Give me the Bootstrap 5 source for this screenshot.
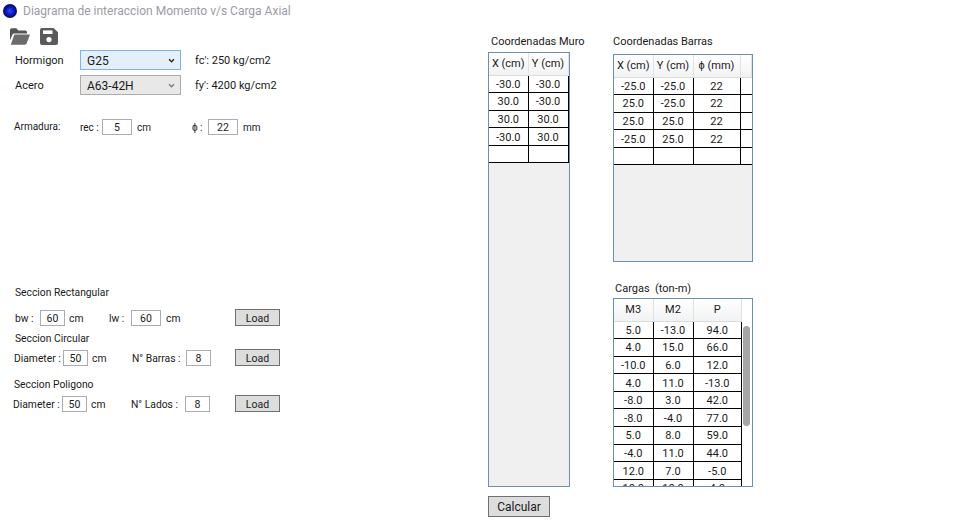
<!DOCTYPE html>
<html lang="es">
<head>
<meta charset="utf-8">
<title>Diagrama de interaccion</title>
<link href="https://cdn.jsdelivr.net/npm/bootstrap@5.3.0/dist/css/bootstrap.min.css" rel="stylesheet">
<style>
html,body{height:100%;}
body{margin:0;background:#fff;color:#1a1a1a;font-family:Roboto,"Open Sans",sans-serif;font-size:11px;line-height:16px;overflow:hidden;}
.lienzo{width:953px;height:528px;}
.izq{width:488px;flex:none;}
.barra-titulo{height:22px;padding-left:3px;gap:6px;color:#9b9ba6;font-size:12px;}
.herramientas{height:28px;padding:6px 0 0 10px;gap:10px;}
.fila{display:flex;align-items:center;height:16px;white-space:nowrap;}
.fila>span,.tit-sec{padding-top:2px;}
.combo-fila{height:20px;margin-bottom:5px;padding-left:15px;}
.combo-fila .rot{width:65px;}
.combo-fila .val{margin-left:14px;}
.form-select.combo{width:101px;height:20px;padding:1px 0 0 6px;border-radius:0;border:1px solid #acacac;font:12px/18px Roboto,sans-serif;color:#1a1a1a;background-color:#e8e8e8;background-image:url("data:image/svg+xml,%3csvg xmlns='http://www.w3.org/2000/svg' viewBox='0 0 8 6'%3e%3cpath fill='none' stroke='%23777' stroke-width='1.5' d='M1 1.5l3 3 3-3'/%3e%3c/svg%3e");background-size:7px 5px;background-position:right 5px center;box-shadow:none;}
.form-select.combo.activo{border-color:#7eb4ea;background-color:#e3effb;background-image:url("data:image/svg+xml,%3csvg xmlns='http://www.w3.org/2000/svg' viewBox='0 0 8 6'%3e%3cpath fill='none' stroke='%23222' stroke-width='1.5' d='M1 1.5l3 3 3-3'/%3e%3c/svg%3e");}
.form-control.caja{height:16px;padding:1px 0 0;border-radius:0;border:1px solid #abadb3;text-align:center;font-size:10.5px;line-height:14px;color:#1a1a1a;min-height:0;}
.ancho30{width:30px;flex:none;}
.ancho25{width:25px;flex:none;}
.btn.carga{width:45px;height:17px;padding:2px 0 0;border-radius:0;border:1px solid #707070;background:#dddddd;color:#1a1a1a;font-size:10.5px;line-height:13px;margin-left:auto;flex:none;}
.arm{margin-top:24px;padding-left:14px;width:280px;font-size:10px;}
.fila>.arm-a{width:66px;flex:none;padding-top:0;}
.arm-rec{width:22px;flex:none;}
.fila>.arm-cm{width:60px;padding-left:5px;flex:none;}
.arm-phi{width:16px;flex:none;}
.fila>.arm-mm{padding-left:5px;}
.sec{width:280px;font-size:10.3px;}
.tit-sec{height:16px;}
.sec-rect{margin-top:149px;padding-left:15px;}
.fila-r{margin-top:9px;height:17px;}
.e-bw{width:25px;flex:none;}
.fila>.e-cm{width:44px;padding-left:4px;flex:none;}
.e-lw{width:22px;flex:none;}
.fila>.e-cm2{padding-left:5px;}
.sec-circ{margin-top:4px;padding-left:15px;}
.sec-pol{margin-top:10px;padding-left:14px;}
.fila-c{height:17px;margin-left:-1px;margin-top:3px;}
.e-dia{width:49px;flex:none;}
.e-nb{width:54px;flex:none;}
.btn.calc{width:62px;height:21px;padding:1px 0 0;border-radius:0;border:1px solid #707070;background:#dddddd;color:#1a1a1a;font-size:12px;line-height:18px;margin-top:9px;}
.der{margin-top:33px;}
.col-muro{width:125px;flex:none;}
.col-barras{width:140px;flex:none;}
.rot-tabla{height:16px;color:#1a1a1a;white-space:nowrap;padding-top:1px;}
.etq-muro{padding-left:3px;}
.etq-cargas{margin-top:18px;padding-left:2px;}
.marco{border:1px solid #6d8fb5;background:#f0f0f0;overflow:hidden;}
.marco-muro{width:82px;height:435px;margin-top:3px;}
.marco-barras{width:140px;height:208px;margin-top:5px;}
.marco-cargas{width:140px;height:189px;margin-top:2px;}
.table.rejilla{table-layout:fixed;margin:0;background:#fff;border-collapse:collapse;font-size:11px;color:#1a1a1a;}
.table.rejilla>thead>tr>th{height:22px;padding:1px 0 0;font-weight:400;text-align:center;vertical-align:middle;border:0;border-right:1px solid #e2e2e2;border-bottom:1px solid #dcdcdc;background:linear-gradient(#ffffff,#f1f2f3);color:#1a1a1a;line-height:16px;}
.table.rejilla>tbody>tr>td{height:17.6px;padding:2px 0 0;text-align:center;vertical-align:middle;border:1px solid #000;border-top:0;border-left:0;background:#fff;color:#1a1a1a;line-height:14px;}
.table.rejilla>tbody>tr>td.sin-borde{border-right:0;}
.t-muro{width:79px;}
.c39{width:39px;}
.c40{width:40px;}
.c47{width:47px;}
.t-barras{width:138px;}
.cuerpo-cargas{height:187px;background:#fff;}
.tabla-scroll{width:128px;flex:none;overflow:hidden;}
.t-cargas{width:128px;}
.carril{width:10px;flex:none;background:#fff;padding:27px 2px 0 1px;}
.pulgar{height:100px;background:#a6a6a6;border-radius:4px;}
</style>
</head>
<body>
<div class="lienzo d-flex">
  <div class="izq">
    <div class="barra-titulo d-flex align-items-center">
      <svg width="14" height="14" viewBox="0 0 14 14" aria-hidden="true">
        <defs><radialGradient id="g" cx="50%" cy="50%" r="50%"><stop offset="0" stop-color="#2a4cff"/><stop offset=".6" stop-color="#0a14b8"/><stop offset="1" stop-color="#050a50"/></radialGradient></defs>
        <circle cx="7" cy="7" r="7" fill="url(#g)"/>
      </svg>
      <span>Diagrama de interaccion Momento v/s Carga Axial</span>
    </div>
    <div class="herramientas d-flex align-items-start">
      <svg width="20" height="17" viewBox="0 0 20 17" aria-hidden="true">
        <path fill="#555" d="M0 2.2C0 1 .8.3 1.8.3h4.6l2 2.2h6.8c1 0 1.8.8 1.8 1.8V5.4H4.6c-1 0-1.8.5-2.2 1.4L0 12.2z"/>
        <path fill="#6c6c6c" d="M4.3 6.6H20l-3.4 9c-.3.7-1 1.1-1.7 1.1H.8z"/>
      </svg>
      <svg width="18" height="17" viewBox="0 0 18 17" aria-hidden="true">
        <path fill="#5a5a5a" d="M2 0h11.5L18 4.2V15a2 2 0 0 1-2 2H2a2 2 0 0 1-2-2V2a2 2 0 0 1 2-2z"/>
        <rect x="3" y="2.4" width="9.5" height="3.6" fill="#fff"/>
        <circle cx="9" cy="11.6" r="2.6" fill="#fff"/>
      </svg>
    </div>
    <div class="fila combo-fila">
      <span class="rot">Hormigon</span>
      <select class="form-select combo activo" aria-label="Hormigon"><option>G25</option></select>
      <span class="val">fc': 250 kg/cm2</span>
    </div>
    <div class="fila combo-fila">
      <span class="rot">Acero</span>
      <select class="form-select combo" aria-label="Acero"><option>A63-42H</option></select>
      <span class="val">fy': 4200 kg/cm2</span>
    </div>
    <div class="fila arm">
      <span class="arm-a">Armadura:</span>
      <span class="arm-rec">rec :</span>
      <input class="form-control caja ancho30" value="5" aria-label="rec">
      <span class="arm-cm">cm</span>
      <span class="arm-phi">ϕ :</span>
      <input class="form-control caja ancho30" value="22" aria-label="phi">
      <span class="arm-mm">mm</span>
    </div>
    <div class="sec sec-rect">
      <div class="tit-sec fila">Seccion Rectangular</div>
      <div class="fila fila-r">
        <span class="e-bw">bw :</span>
        <input class="form-control caja ancho25" value="60" aria-label="bw">
        <span class="e-cm">cm</span>
        <span class="e-lw">lw :</span>
        <input class="form-control caja ancho30" value="60" aria-label="lw">
        <span class="e-cm2">cm</span>
        <button class="btn carga" type="button">Load</button>
      </div>
    </div>
    <div class="sec sec-circ">
      <div class="tit-sec fila">Seccion Circular</div>
      <div class="fila fila-c">
        <span class="e-dia">Diameter :</span>
        <input class="form-control caja ancho25" value="50" aria-label="Diameter">
        <span class="e-cm">cm</span>
        <span class="e-nb">N° Barras :</span>
        <input class="form-control caja ancho25" value="8" aria-label="Barras">
        <button class="btn carga" type="button">Load</button>
      </div>
    </div>
    <div class="sec sec-pol">
      <div class="tit-sec fila">Seccion Poligono</div>
      <div class="fila fila-c">
        <span class="e-dia">Diameter :</span>
        <input class="form-control caja ancho25" value="50" aria-label="Diameter">
        <span class="e-cm">cm</span>
        <span class="e-nb">N° Lados :</span>
        <input class="form-control caja ancho25" value="8" aria-label="Lados">
        <button class="btn carga" type="button">Load</button>
      </div>
    </div>
  </div>
  <div class="der d-flex">
    <div class="col-muro">
      <div class="rot-tabla etq-muro">Coordenadas Muro</div>
      <div class="marco marco-muro">
        <table class="table rejilla t-muro">
          <colgroup><col class="c39"><col class="c40"></colgroup>
          <thead><tr><th>X (cm)</th><th>Y (cm)</th></tr></thead>
          <tbody>
            <tr><td>-30.0</td><td>-30.0</td></tr>
            <tr><td>30.0</td><td>-30.0</td></tr>
            <tr><td>30.0</td><td>30.0</td></tr>
            <tr><td>-30.0</td><td>30.0</td></tr>
            <tr><td></td><td></td></tr>
          </tbody>
        </table>
      </div>
      <button class="btn calc" type="button">Calcular</button>
    </div>
    <div class="col-barras">
      <div class="rot-tabla etq-barras">Coordenadas Barras</div>
      <div class="marco marco-barras">
        <table class="table rejilla t-barras">
          <colgroup><col class="c39"><col class="c40"><col class="c47"><col></colgroup>
          <thead><tr><th>X (cm)</th><th>Y (cm)</th><th>ϕ (mm)</th><th></th></tr></thead>
          <tbody>
            <tr><td>-25.0</td><td>-25.0</td><td>22</td><td class="sin-borde"></td></tr>
            <tr><td>25.0</td><td>-25.0</td><td>22</td><td class="sin-borde"></td></tr>
            <tr><td>25.0</td><td>25.0</td><td>22</td><td class="sin-borde"></td></tr>
            <tr><td>-25.0</td><td>25.0</td><td>22</td><td class="sin-borde"></td></tr>
            <tr><td></td><td></td><td></td><td class="sin-borde"></td></tr>
          </tbody>
        </table>
      </div>
      <div class="rot-tabla etq-cargas">Cargas&nbsp; (ton-m)</div>
      <div class="marco marco-cargas">
        <div class="cuerpo-cargas d-flex">
          <div class="tabla-scroll">
            <table class="table rejilla t-cargas">
              <colgroup><col class="c39"><col class="c40"><col></colgroup>
              <thead><tr><th>M3</th><th>M2</th><th>P</th></tr></thead>
              <tbody>
                <tr><td>5.0</td><td>-13.0</td><td>94.0</td></tr>
                <tr><td>4.0</td><td>15.0</td><td>66.0</td></tr>
                <tr><td>-10.0</td><td>6.0</td><td>12.0</td></tr>
                <tr><td>4.0</td><td>11.0</td><td>-13.0</td></tr>
                <tr><td>-8.0</td><td>3.0</td><td>42.0</td></tr>
                <tr><td>-8.0</td><td>-4.0</td><td>77.0</td></tr>
                <tr><td>5.0</td><td>8.0</td><td>59.0</td></tr>
                <tr><td>-4.0</td><td>11.0</td><td>44.0</td></tr>
                <tr><td>12.0</td><td>7.0</td><td>-5.0</td></tr>
                <tr><td>10.0</td><td>10.0</td><td>4.0</td></tr>
              </tbody>
            </table>
          </div>
          <div class="carril"><div class="pulgar"></div></div>
        </div>
      </div>
    </div>
  </div>
</div>
</body>
</html>
